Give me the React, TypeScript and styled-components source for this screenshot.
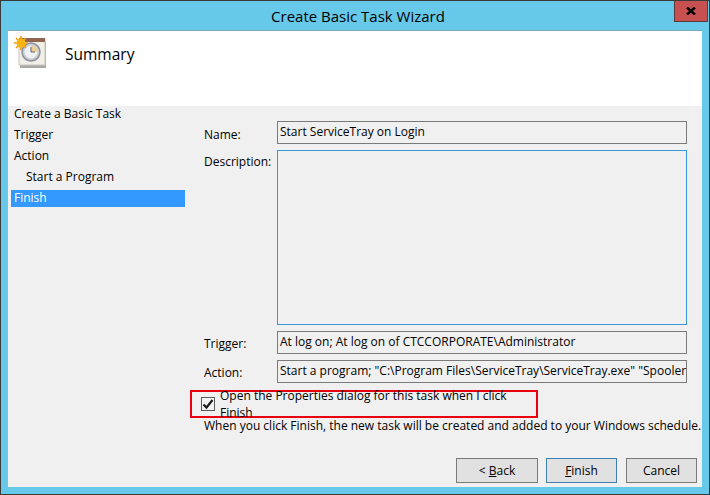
import React from 'react';
import styled, {createGlobalStyle} from 'styled-components';

const GlobalStyle = createGlobalStyle`
  html, body {
    margin: 0;
    padding: 0;
    background: #66c9ea;
  }
  body {
    font-family: "Open Sans", "Noto Sans", sans-serif;
    font-size: 12px;
    color: #000;
  }
`

const steps = [
  {label: 'Create a Basic Task'},
  {label: 'Trigger'},
  {label: 'Action'},
  {label: 'Start a Program', nested: true},
  {label: 'Finish', active: true},
]

const TaskIcon = () => (
  <svg width="32" height="32" viewBox="0 0 32 32">
    <rect x="6" y="6" width="26" height="27" fill="#a8a8a8"/>
    <rect x="5" y="3" width="26" height="26" fill="#f1efe8" stroke="#c9c6bd"/>
    <rect x="5" y="2" width="26" height="4" fill="#8f6450"/>
    <circle cx="17" cy="16" r="9" fill="#c9ced4" stroke="#8c9298" strokeWidth="1.5"/>
    <circle cx="17" cy="16" r="6.5" fill="#eef0f2"/>
    <path d="M17 16V9.5A6.5 6.5 0 0 1 23.5 16Z" fill="#f0cf95"/>
    <path d="M17 11v5h4" fill="none" stroke="#5c6670" strokeWidth="1"/>
    <g stroke="#f59a06" strokeWidth="1.6">
      <path d="M7 0v14M0 7h14M2 2l10 10M12 2L2 12"/>
    </g>
    <circle cx="7" cy="7" r="4.5" fill="#fbb40f"/>
  </svg>
)

const CheckMark = () => (
  <svg width="12" height="12" viewBox="0 0 12 12">
    <path d="M1.5 6.5L4.5 9.5L10.5 2" fill="none" stroke="#1c1c1c" strokeWidth="2.2"/>
  </svg>
)

const CloseGlyph = () => (
  <svg width="10" height="8" viewBox="0 0 10 8">
    <path d="M1 0.5L9 7.5M9 0.5L1 7.5" fill="none" stroke="#000" strokeWidth="2.4"/>
  </svg>
)

export default function App() {
  return (
    <>
      <GlobalStyle/>
      <Window>
        <TitleBar>
          <span/>
          <Title>Create Basic Task Wizard</Title>
          <CloseButton><CloseGlyph/></CloseButton>
        </TitleBar>
        <Client>
          <Header>
            <TaskIcon/>
            <HeaderText>Summary</HeaderText>
          </Header>
          <Body>
            <Sidebar>
              {steps.map((s) => (
                <Step key={s.label} $nested={s.nested} $active={s.active}>{s.label}</Step>
              ))}
            </Sidebar>
            <Main>
              <Form>
                <NameLabel>Name:</NameLabel>
                <ReadOnly>Start ServiceTray on Login</ReadOnly>
                <DescriptionLabel>Description:</DescriptionLabel>
                <DescriptionBox/>
                <FieldLabel>Trigger:</FieldLabel>
                <ReadOnly>At log on; At log on of CTCCORPORATE\Administrator</ReadOnly>
                <FieldLabel>Action:</FieldLabel>
                <ReadOnly>Start a program; "C:\Program Files\ServiceTray\ServiceTray.exe" "Spooler" -icon</ReadOnly>
              </Form>
              <Highlight>
                <CheckBox><CheckMark/></CheckBox>
                <span>Open the Properties dialog for this task when I click Finish</span>
              </Highlight>
              <HelpText>When you click Finish, the new task will be created and added to your Windows schedule.</HelpText>
            </Main>
          </Body>
          <Footer>
            <BackButton>&lt; <u>B</u>ack</BackButton>
            <Button $primary><u>F</u>inish</Button>
            <Button>Cancel</Button>
          </Footer>
        </Client>
      </Window>
    </>
  );
}

const Window = styled.div`
  box-sizing: border-box;
  width: 710px;
  height: 495px;
  display: flex;
  flex-direction: column;
  border: 1px solid #3a3a3a;
  background: #66c9ea;
  padding: 0 7px 7px 7px;
`

const TitleBar = styled.div`
  display: grid;
  grid-template-columns: 1fr auto 1fr;
  height: 29px;
  flex: none;
  margin-right: -6px;
`

const Title = styled.div`
  padding-top: 5px;
  font-size: 15px;
  line-height: 20px;
  color: #000;
`

const CloseButton = styled.div`
  box-sizing: border-box;
  justify-self: end;
  width: 34px;
  height: 21px;
  display: flex;
  align-items: center;
  justify-content: center;
  background: #c75050;
  border: 1px solid #5a3a3a;
  border-top: none;
`

const Client = styled.div`
  flex: 1;
  display: flex;
  flex-direction: column;
  min-height: 0;
  background: #f0f0f0;
  border-top: 1px solid #83a9b8;
`

const Header = styled.div`
  height: 75px;
  flex: none;
  display: flex;
  align-items: flex-start;
  gap: 19px;
  padding: 5px 0 0 6px;
  box-sizing: border-box;
  background: #fff;
`

const HeaderText = styled.div`
  font-size: 15.5px;
  line-height: 22px;
  padding-top: 7px;
`

const Body = styled.div`
  flex: 1;
  display: flex;
  min-height: 0;
`

const Sidebar = styled.div`
  width: 174px;
  flex: none;
  margin-left: 3px;
  display: flex;
  flex-direction: column;
  gap: 4px;
`

const Step = styled.div<{$nested?: boolean, $active?: boolean}>`
  height: 17px;
  line-height: 15px;
  padding-left: ${({$nested}) => $nested ? '15px' : '3px'};
  background: ${({$active}) => $active ? '#3399ff' : 'transparent'};
  color: ${({$active}) => $active ? '#fff' : '#000'};
`

const Main = styled.div`
  flex: 1;
  display: flex;
  flex-direction: column;
  padding: 15px 15px 0 5px;
`

const Form = styled.div`
  display: grid;
  grid-template-columns: 73px 410px;
  grid-template-rows: 23px 175px 23px 23px;
  row-gap: 6px;
  margin-left: 14px;
`

const FieldLabel = styled.div`
  line-height: 16px;
  padding-top: 5px;
`

const NameLabel = styled(FieldLabel)`
  padding-top: 6px;
`

const DescriptionLabel = styled(FieldLabel)`
  padding-top: 4px;
`

const ReadOnly = styled.div`
  box-sizing: border-box;
  border: 1px solid #7a7a7a;
  background: #f0f0f0;
  padding: 0 2px;
  line-height: 20px;
  white-space: nowrap;
  overflow: hidden;
`

const DescriptionBox = styled.div`
  box-sizing: border-box;
  border: 1px solid #3a9ad8;
  background: #f0f0f0;
`

const Highlight = styled.div`
  box-sizing: border-box;
  width: 348px;
  height: 28px;
  margin-top: 7px;
  display: flex;
  align-items: center;
  gap: 5px;
  padding-left: 9px;
  border: 2px solid #e8000f;
`

const CheckBox = styled.div`
  box-sizing: border-box;
  width: 14px;
  height: 14px;
  display: flex;
  align-items: center;
  justify-content: center;
  background: #f4f4f4;
  border: 1px solid #5a5a5a;
`

const HelpText = styled.div`
  margin: 0 0 0 14px;
  line-height: 16px;
  padding-top: 0;
  white-space: nowrap;
`

const Footer = styled.div`
  height: 29px;
  flex: none;
  display: flex;
  justify-content: flex-end;
  gap: 9px;
  padding-right: 5px;
`

const Button = styled.button<{$primary?: boolean}>`
  box-sizing: border-box;
  width: 71px;
  height: 25px;
  padding: 0;
  font: inherit;
  color: #000;
  background: #e1e1e1;
  border: 1px solid ${({$primary}) => $primary ? '#3c7fb1' : '#7a7a7a'};
`

const BackButton = styled(Button)`
  width: 82px;
  margin-right: -1px;
`
